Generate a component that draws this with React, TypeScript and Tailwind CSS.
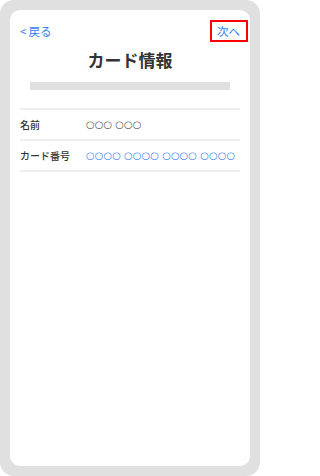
import React from "react";

const jp = { fontFamily: '"Noto Sans CJK JP", "Noto Sans", sans-serif' };
const circ = { fontFamily: '"DejaVu Sans", sans-serif' };

export default function App() {
  return (
    <div
      className="w-[260px] h-[476px] bg-[#e0e0e0] rounded-[14px] p-[10px]"
      style={jp}
    >
      <div className="bg-white rounded-[10px] h-full flex flex-col">
        <div className="flex items-center justify-between pt-[10px] px-[10px]">
          <span className="text-[11.5px] leading-[14px] text-[#2f7cf6]">
            <span className="mr-[2px]">&lt;</span>戻る
          </span>
          <span className="text-[11.5px] leading-[14px] text-[#2f7cf6] border-2 border-[#ff0000] pl-[5px] pr-[6px] py-[2px] -mr-[8px]">
            次へ
          </span>
        </div>
        <h1 className="mt-[6px] text-center text-[17px] leading-[24px] font-bold text-[#333333]">
          カード情報
        </h1>
        <div className="mt-[10px] mx-[20px] h-[8px] bg-[#e0e0e0]" />
        <div className="mt-[18px] mx-[10px] border-t-2 border-[#eeeeee]">
          <div className="flex items-center h-[31px] border-b-2 border-[#eeeeee]">
            <span className="w-[66px] text-[10px] font-medium text-[#333333]">名前</span>
            <span className="text-[10px] text-[#555555]" style={circ}>○○○ ○○○</span>
          </div>
          <div className="flex items-center h-[31px] border-b-2 border-[#eeeeee]">
            <span className="w-[66px] text-[10px] font-medium text-[#333333]">カード番号</span>
            <span className="text-[10px] text-[#3b82f6]" style={circ}>
              ○○○○ ○○○○ ○○○○ ○○○○
            </span>
          </div>
        </div>
      </div>
    </div>
  );
}
